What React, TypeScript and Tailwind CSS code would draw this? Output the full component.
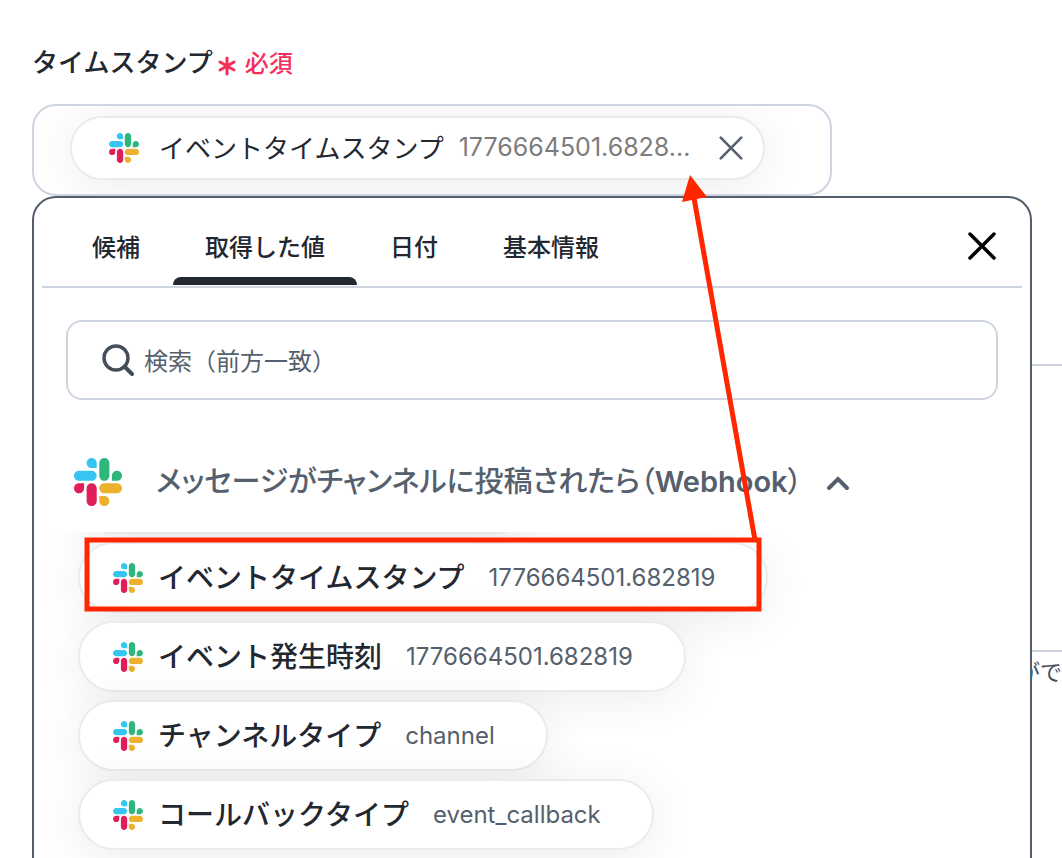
import React, { useState } from 'react'

type EventItem = {
  name: string
  value: string
}

const tabs = ['候補', '取得した値', '日付', '基本情報']

const eventItems: EventItem[] = [
  { name: 'イベントタイムスタンプ', value: '1776664501.682819' },
  { name: 'イベント発生時刻', value: '1776664501.682819' },
  { name: 'チャンネルタイプ', value: 'channel' },
  { name: 'コールバックタイプ', value: 'event_callback' },
]

const SlackIcon = ({ className }: { className: string }) => (
  <svg className={className} viewBox="0 0 122.8 122.8" aria-hidden="true">
    <path
      fill="#E01E5A"
      d="M25.8 77.6c0 7.1-5.8 12.9-12.9 12.9S0 84.7 0 77.6s5.8-12.9 12.9-12.9h12.9v12.9zm6.5 0c0-7.1 5.8-12.9 12.9-12.9s12.9 5.8 12.9 12.9v32.3c0 7.1-5.8 12.9-12.9 12.9s-12.9-5.8-12.9-12.9V77.6z"
    />
    <path
      fill="#36C5F0"
      d="M45.2 25.8c-7.1 0-12.9-5.8-12.9-12.9S38.1 0 45.2 0s12.9 5.8 12.9 12.9v12.9H45.2zm0 6.5c7.1 0 12.9 5.8 12.9 12.9s-5.8 12.9-12.9 12.9H12.9C5.8 58.1 0 52.3 0 45.2s5.8-12.9 12.9-12.9h32.3z"
    />
    <path
      fill="#2EB67D"
      d="M97 45.2c0-7.1 5.8-12.9 12.9-12.9s12.9 5.8 12.9 12.9-5.8 12.9-12.9 12.9H97V45.2zm-6.5 0c0 7.1-5.8 12.9-12.9 12.9s-12.9-5.8-12.9-12.9V12.9C64.7 5.8 70.5 0 77.6 0s12.9 5.8 12.9 12.9v32.3z"
    />
    <path
      fill="#ECB22E"
      d="M77.6 97c7.1 0 12.9 5.8 12.9 12.9s-5.8 12.9-12.9 12.9-12.9-5.8-12.9-12.9V97h12.9zm0-6.5c-7.1 0-12.9-5.8-12.9-12.9s5.8-12.9 12.9-12.9h32.3c7.1 0 12.9 5.8 12.9 12.9s-5.8 12.9-12.9 12.9H77.6z"
    />
  </svg>
)

const CloseIcon = ({ className }: { className: string }) => (
  <svg className={className} viewBox="0 0 28 28" fill="none" stroke="currentColor" strokeLinecap="round" aria-hidden="true">
    <path d="M2 2L26 26M26 2L2 26" />
  </svg>
)

const EventRow = ({ item }: { item: EventItem }) => (
  <li>
    <button
      type="button"
      className="flex h-[71px] items-center rounded-full border-2 border-[#e8ecf1] bg-white pl-[33px] pr-[51px] shadow-[0_6px_48px_rgba(0,0,0,0.08)]"
    >
      <SlackIcon className="h-[30px] w-[30px]" />
      <span className="ml-[15px] text-[28px] leading-10 font-medium text-[#23272f]">{item.name}</span>
      <span className="ml-6 text-2xl text-[#555f6d]">{item.value}</span>
    </button>
  </li>
)

const ValuePicker = () => {
  const [activeTab, setActiveTab] = useState('取得した値')
  const [open, setOpen] = useState(true)

  return (
    <div className="absolute top-full left-0 z-10 h-[720px] w-[1000px] overflow-hidden rounded-3xl border-2 border-[#535e6c] bg-white">
      <div className="mx-2 flex h-[90px] items-stretch justify-between border-b-2 border-[#ced5e0] pl-[18px]">
        <div role="tablist" className="flex gap-px">
          {tabs.map((tab) => (
            <button
              key={tab}
              type="button"
              role="tab"
              aria-selected={activeTab === tab}
              onClick={() => setActiveTab(tab)}
              className="flex flex-col pt-8 text-2xl leading-9 font-medium text-[#23272f]"
            >
              <span className="px-8">{tab}</span>
              {activeTab === tab && <span className="mt-[11px] h-2 w-full rounded-t-lg bg-[#23272f]" />}
            </button>
          ))}
        </div>
        <button type="button" aria-label="閉じる" className="mr-[26px] pt-2 text-black">
          <CloseIcon className="h-7 w-7 stroke-[3.5]" />
        </button>
      </div>

      <div className="mx-8 mt-8 flex h-20 items-center rounded-2xl border-2 border-[#ced5e0] pl-[34px]">
        <svg className="h-8 w-8 text-[#454d59]" viewBox="0 0 32 32" fill="none" stroke="currentColor" aria-hidden="true">
          <circle cx="14" cy="14" r="12" strokeWidth="3.4" />
          <path d="M22.500 22.500L30 30" strokeWidth="4" strokeLinecap="round" />
        </svg>
        <input
          type="text"
          aria-label="検索"
          placeholder="検索（前方一致）"
          className="ml-[10px] min-w-0 flex-1 bg-transparent pt-1 text-2xl outline-none placeholder:text-[#555f6d]"
        />
      </div>

      <button
        type="button"
        aria-expanded={open}
        onClick={() => setOpen(!open)}
        className="mt-[58px] ml-10 flex h-12 items-center text-[#555f6d]"
      >
        <SlackIcon className="h-12 w-12" />
        <span className="ml-[34px] text-[29px] leading-10 font-medium [font-feature-settings:'palt']">
          メッセージがチャンネルに投稿されたら（<span className="font-semibold">Webhook</span>）
        </span>
        <svg className="ml-6 h-6 w-6" viewBox="0 0 24 24" fill="none" stroke="currentColor" strokeWidth="4" aria-hidden="true">
          <path d="M3 18L12 9L21 18" strokeLinecap="round" />
        </svg>
      </button>

      {open && (
        <div className="mt-[26px] overflow-hidden pl-11">
          <div className="-mt-[69px] mb-2 h-[71px] w-[454px] rounded-full border-2 border-[#e8ecf1] bg-white shadow-[0_6px_48px_rgba(0,0,0,0.08)]" />
          <ul className="flex flex-col gap-2 pb-16">
            {eventItems.map((item) => (
              <EventRow key={item.name} item={item} />
            ))}
          </ul>
        </div>
      )}
    </div>
  )
}

const App: React.FC = () => {
  return (
    <main className="relative h-screen overflow-hidden bg-white pt-11 pl-8 font-[Inter,'Noto_Sans_CJK_JP',sans-serif] text-[#23272f]">
      <div className="flex h-9 items-center">
        <h2 className="text-[26px] font-medium">タイムスタンプ</h2>
        <span className="ml-1 flex items-center pt-1 text-2xl font-medium text-[#f52d5b]">
          <svg className="mt-1 mr-2 h-5 w-5" viewBox="0 0 20 20" stroke="currentColor" strokeWidth="3" strokeLinecap="round" aria-hidden="true">
            <path d="M10 2V18M3 6L17 14M17 6L3 14" />
          </svg>
          必須
        </span>
      </div>

      <div className="relative mt-6 w-[800px]">
        <div className="h-[92px] overflow-hidden rounded-3xl border-2 border-[#ced5e0] pt-[10px] pl-9">
          <div className="flex h-16 w-[695px] items-center rounded-full border-2 border-[#e8ecf1] bg-white pl-[37px] shadow-[0_6px_48px_rgba(0,0,0,0.08)]">
            <SlackIcon className="h-[30px] w-[30px]" />
            <span className="ml-5 text-[26px]">イベントタイムスタンプ</span>
            <span className="ml-[15px] text-[25px] text-[#7c7c7c]">1776664501.6828...</span>
            <button type="button" aria-label="削除" className="mr-5 ml-auto text-[#555f6d]">
              <CloseIcon className="h-6 w-6 stroke-3" />
            </button>
          </div>
        </div>
        <ValuePicker />
      </div>

      <div className="mt-[168px] h-[288px] w-[1100px] rounded-3xl border-2 border-[#ced5e0]" />
      <p className="mt-1 pl-[986px] text-[22px] whitespace-nowrap text-[#454d59]">がで</p>

      <svg className="pointer-events-none absolute top-0 left-0 z-20 h-[858px] w-[1062px]" viewBox="0 0 1062 858" fill="none" aria-hidden="true">
        <rect x="87" y="540" width="672" height="69" stroke="#ff2600" strokeWidth="5" />
        <path d="M755 540L694 198" stroke="#ff2600" strokeWidth="5" />
        <path d="M690 175L707 197L682 202Z" fill="#ff2600" />
      </svg>
    </main>
  )
}

export default App
